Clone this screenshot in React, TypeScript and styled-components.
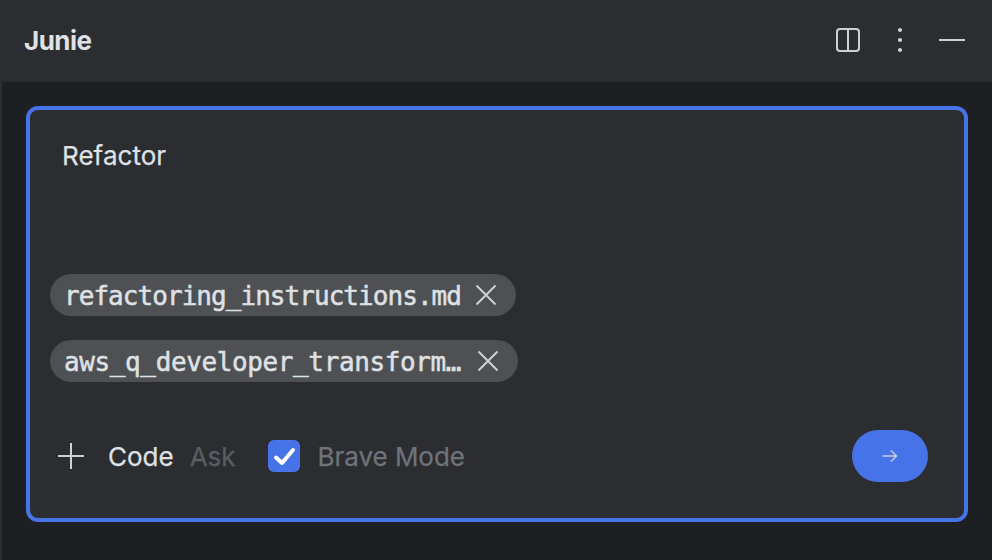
import React from "react";
import styled, { createGlobalStyle } from "styled-components";

const GlobalStyle = createGlobalStyle`
  * { box-sizing: border-box; }
  body { margin: 0; background: #1e1f22; overflow: hidden; }
`;

const Panel = styled.main`
  width: 992px;
  height: 560px;
  display: flex;
  flex-direction: column;
  background: #1e1f22;
  color: #dfe1e5;
  font: 400 26px/32px Inter, sans-serif;
  -webkit-text-stroke: 0.25px currentColor;
`;

const Header = styled.header`
  height: 82px;
  flex: none;
  display: flex;
  align-items: center;
  justify-content: space-between;
  padding: 0 27px 2px 24px;
  background: #2b2d30;
`;

const Title = styled.h1`
  margin: 0;
  padding-top: 2px;
  font-size: 26px;
  line-height: 32px;
  font-weight: 700;
  letter-spacing: -0.55px;
  -webkit-text-stroke: 0;
`;

const Actions = styled.div`
  display: flex;
  align-items: center;
`;

const IconButton = styled.button<{ $gap?: number }>`
  display: flex;
  padding: 0;
  margin: 0 0 0 ${(p) => p.$gap ?? 0}px;
  border: 0;
  background: none;
  color: #ced0d6;
`;

const Body = styled.section`
  flex: 1;
  padding: 24px 24px 38px 24px;
  border-left: 2px solid #2b2d30;
`;

const Composer = styled.div`
  height: 416px;
  display: flex;
  flex-direction: column;
  border: 4px solid #4674e8;
  border-radius: 12px;
  background: #2b2d30;
`;

const Prompt = styled.div`
  height: 164px;
  padding: 30px 32px;
  letter-spacing: 0.05px;
`;

const Attachments = styled.div`
  display: flex;
  flex-direction: column;
  align-items: flex-start;
  gap: 24px;
  padding-left: 20px;
`;

const Chip = styled.div<{ $width: number }>`
  width: ${(p) => p.$width}px;
  height: 42px;
  display: flex;
  align-items: center;
  justify-content: space-between;
  padding: 0 19px 0 14px;
  border-radius: 21px;
  background: #4e5054;
`;

const FileName = styled.span<{ $tracking: number }>`
  padding-top: 2px;
  font: 400 26px/42px "DejaVu Sans Mono", monospace;
  letter-spacing: ${(p) => p.$tracking}px;
  white-space: nowrap;
  -webkit-text-stroke: 0.5px currentColor;
`;

const Toolbar = styled.div`
  display: flex;
  align-items: center;
  height: 52px;
  margin-top: 48px;
  padding: 0 36px 0 28px;
`;

const Mode = styled.span<{ $active?: boolean; $gap: number }>`
  margin-left: ${(p) => p.$gap}px;
  padding-top: 2px;
  color: ${(p) => (p.$active ? "#dfe1e5" : "#5a5d63")};
`;

const BraveMode = styled.label`
  display: flex;
  align-items: center;
  gap: 18px;
  margin-left: 32px;
  color: #6f737a;
`;

const Checkbox = styled.span`
  display: flex;
  width: 32px;
  height: 32px;
  border-radius: 6px;
  background: #4674e8;
`;

const BraveLabel = styled.span`
  padding-top: 2px;
  letter-spacing: -0.05px;
`;

const Send = styled.button`
  display: flex;
  align-items: center;
  justify-content: center;
  width: 76px;
  height: 52px;
  margin-left: auto;
  padding: 0;
  border: 0;
  border-radius: 26px;
  background: #4674e8;
`;

const Close = () => (
  <svg width="22" height="22" viewBox="0 0 22 22" fill="none" stroke="#ced0d6" strokeWidth="2">
    <path d="M1.5 1.5 20.5 20.5M20.5 1.5 1.5 20.5" />
  </svg>
);

const files = [
  { name: "refactoring_instructions.md", width: 466, tracking: -0.95 },
  { name: "aws_q_developer_transform…", width: 468, tracking: -0.38 },
];

export default function App() {
  return (
    <Panel>
      <GlobalStyle />
      <Header>
        <Title>Junie</Title>
        <Actions>
          <IconButton aria-label="Split view">
            <svg width="26" height="26" viewBox="0 0 26 26" fill="none" stroke="currentColor" strokeWidth="2">
              <rect x="2" y="2" width="22" height="22" rx="3" />
              <path d="M13 2v22" />
            </svg>
          </IconButton>
          <IconButton aria-label="More" $gap={36}>
            <svg width="6" height="26" viewBox="0 0 6 26" fill="currentColor">
              <circle cx="3" cy="3" r="2.1" />
              <circle cx="3" cy="13" r="2.1" />
              <circle cx="3" cy="23" r="2.1" />
            </svg>
          </IconButton>
          <IconButton aria-label="Hide" $gap={36}>
            <svg width="26" height="26" viewBox="0 0 26 26" fill="none" stroke="currentColor" strokeWidth="2">
              <path d="M0 13h26" />
            </svg>
          </IconButton>
        </Actions>
      </Header>
      <Body>
        <Composer>
          <Prompt>Refactor</Prompt>
          <Attachments>
            {files.map((f) => (
              <Chip key={f.name} $width={f.width}>
                <FileName $tracking={f.tracking}>{f.name}</FileName>
                <IconButton aria-label="Remove"><Close /></IconButton>
              </Chip>
            ))}
          </Attachments>
          <Toolbar>
            <IconButton aria-label="Add">
              <svg width="26" height="26" viewBox="0 0 26 26" fill="none" stroke="currentColor" strokeWidth="2">
                <path d="M13 0v26M0 13h26" />
              </svg>
            </IconButton>
            <Mode $active $gap={24}>Code</Mode>
            <Mode $gap={16}>Ask</Mode>
            <BraveMode>
              <Checkbox>
                <svg width="32" height="32" viewBox="0 0 32 32" fill="none" stroke="#fff" strokeWidth="4" strokeLinecap="round" strokeLinejoin="round">
                  <path d="m8 17.5 6 5.5L25 10" />
                </svg>
              </Checkbox>
              <BraveLabel>Brave Mode</BraveLabel>
            </BraveMode>
            <Send aria-label="Send">
              <svg width="16" height="14" viewBox="0 0 16 14" fill="none" stroke="#ced0d6" strokeWidth="1.4">
                <path d="M.5 7h14M9 1.5 14.5 7 9 12.5" />
              </svg>
            </Send>
          </Toolbar>
        </Composer>
      </Body>
    </Panel>
  );
}
